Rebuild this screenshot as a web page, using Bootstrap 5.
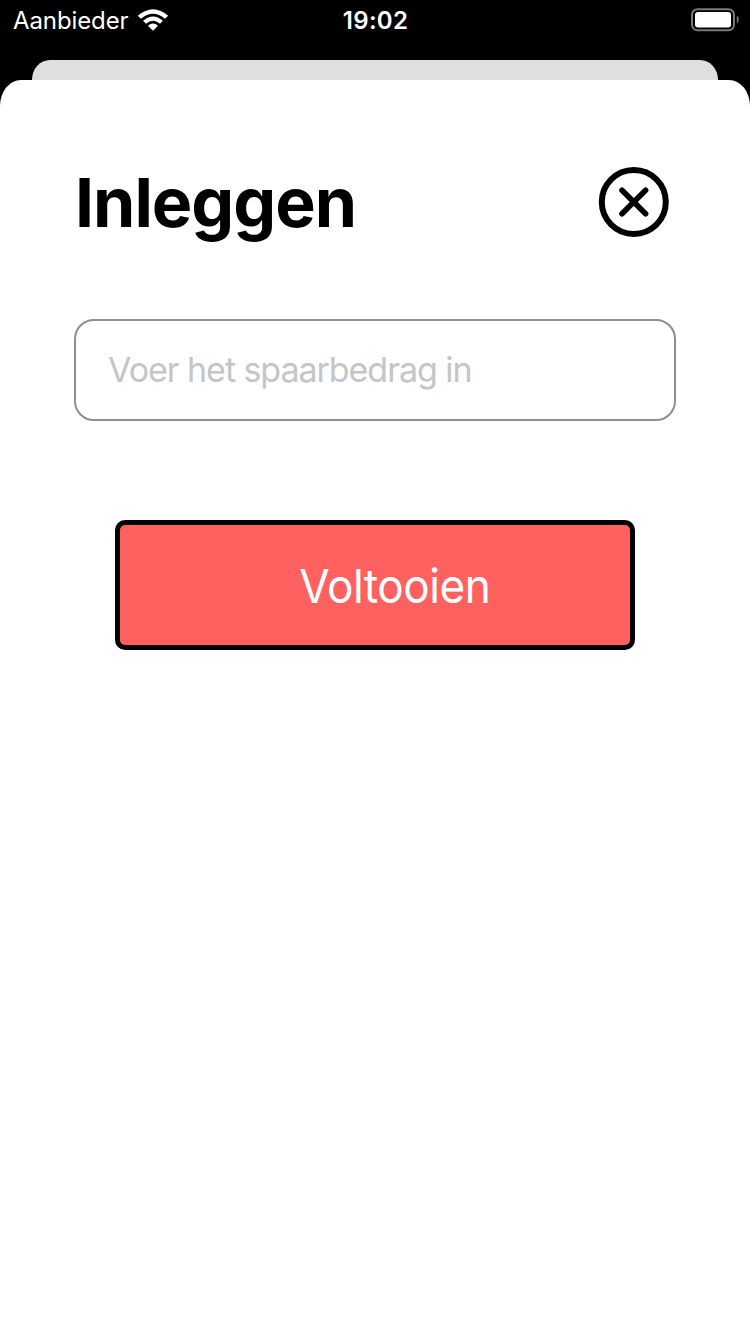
<!DOCTYPE html>
<html lang="nl">
<head>
<meta charset="utf-8">
<meta name="viewport" content="width=device-width, initial-scale=1">
<title>Inleggen</title>
<link href="https://cdn.jsdelivr.net/npm/bootstrap@5.3.0/dist/css/bootstrap.min.css" rel="stylesheet">
<style>
body { font-family: Inter, "Liberation Sans", sans-serif; }
.phone { width: 750px; height: 1334px; background: #000; }
.status-bar { height: 60px; padding: 0 11px 20px 13px; font-size: 24px; line-height: 38px; }
.carrier { letter-spacing: -.1px; padding-top: 2px; }
.clock { font-size: 24px; letter-spacing: .3px; padding: 2px 1px 0 0; }
.sheet-behind { height: 20px; margin: 0 32px; background: #dfdfdf; border-radius: 18px 18px 0 0 / 20px 20px 0 0; }
.sheet { padding: 86px 74px 0; border-radius: 21px 21px 0 0 / 26px 26px 0 0; }
.sheet-title { font-size: 68px; line-height: 72px; letter-spacing: -1px; padding-left: 1px; }
.close-btn { width: 72px; height: 72px; margin-right: 6px; }
.amount { height: 102px; margin-top: 81px; padding: 0 32px 1px; border: 2px solid #8e8e93; border-radius: 20px; font-size: 34px; letter-spacing: -1.05px; }
.amount::placeholder { color: #c5c5c7; opacity: 1; }
.submit-btn { width: 520px; height: 130px; margin-top: 99px; padding: 2px 0 0 40px; border: 5px solid #000; border-radius: 10px; background: #ff6161; font-size: 47px; letter-spacing: -.5px; color: #fff; }
.submit-label { transform: scaleX(.938); }
</style>
</head>
<body>
<div class="phone d-flex flex-column overflow-hidden">
  <header class="status-bar row g-0 text-white">
    <div class="col d-flex align-items-center">
      <span class="carrier">Aanbieder</span>
      <svg class="ms-2" width="32" height="24" viewBox="0 0 32 24" fill="#fff" aria-hidden="true">
        <path d="M.8 7.8Q16-5.2 31.2 7.8L28 10.8Q16 .6 4 10.8Z"/>
        <path d="M6.1 12.8Q16 4 25.9 12.8L23 15.8Q16 9.6 9 15.8Z"/>
        <path d="M11 17.8Q16 13.4 21 17.8L16 22.8Z"/>
      </svg>
    </div>
    <div class="clock col-auto fw-semibold">19:02</div>
    <div class="col d-flex align-items-center justify-content-end">
      <svg width="48" height="24" viewBox="0 0 48 24" aria-hidden="true">
        <rect x="1" y="1.2" width="42" height="21" rx="5.5" fill="none" stroke="#777" stroke-width="2"/>
        <rect x="4" y="4" width="36" height="15.5" rx="3" fill="#fff"/>
        <path d="M45.8 7.5Q47.8 8.8 47.8 11.5T45.8 15.5Z" fill="#777"/>
      </svg>
    </div>
  </header>
  <div class="sheet-behind"></div>
  <main class="sheet bg-white flex-grow-1">
    <div class="d-flex align-items-center justify-content-between">
      <h1 class="sheet-title fw-bold text-black mb-0">Inleggen</h1>
      <button type="button" class="close-btn btn p-0 border-0 d-flex" aria-label="Sluiten">
        <svg width="72" height="72" viewBox="0 0 72 72" fill="none" stroke="#000" aria-hidden="true">
          <circle cx="35.8" cy="36" r="32" stroke-width="6"/>
          <path d="M24 24.2 47.6 47.8M47.6 24.2 24 47.8" stroke-width="5.6" stroke-linecap="round"/>
        </svg>
      </button>
    </div>
    <input type="text" class="amount form-control" placeholder="Voer het spaarbedrag in">
    <button type="button" class="submit-btn btn d-block mx-auto"><span class="submit-label d-inline-block">Voltooien</span></button>
  </main>
</div>
<script src="https://cdn.jsdelivr.net/npm/bootstrap@5.3.0/dist/js/bootstrap.bundle.min.js"></script>
</body>
</html>
